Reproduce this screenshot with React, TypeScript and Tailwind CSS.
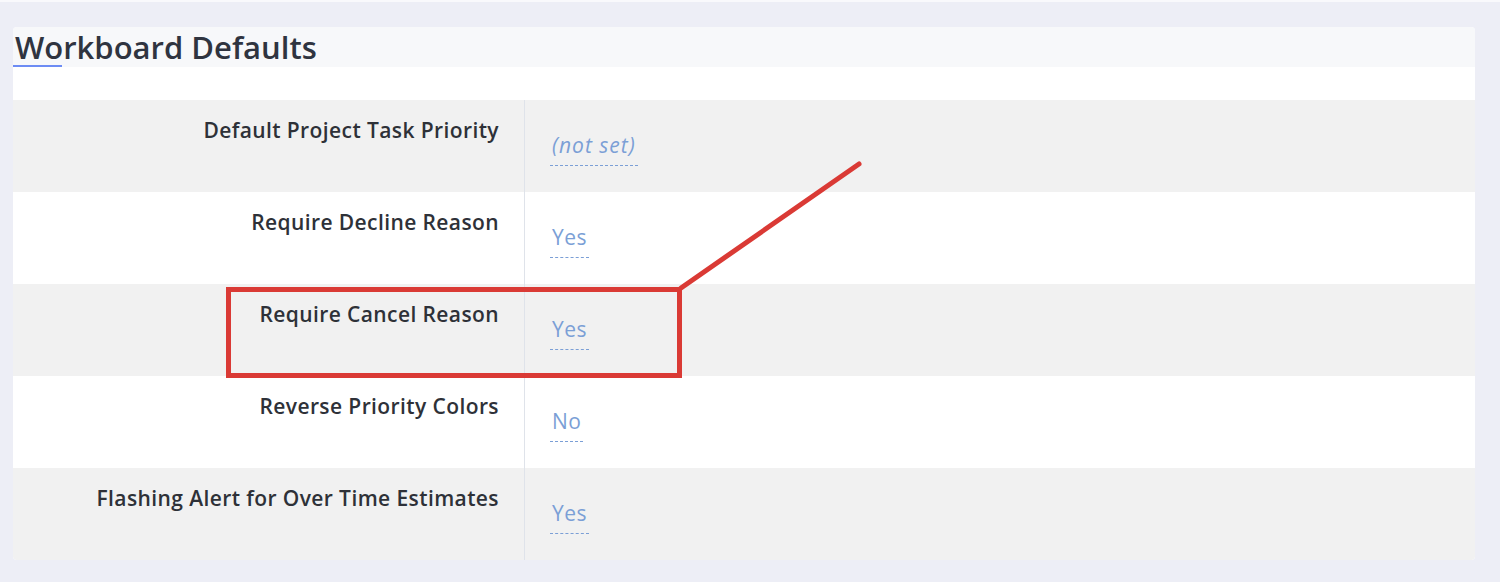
import React from 'react';

type Setting = {
  label: string;
  value: string;
  empty?: boolean;
};

const settings: Setting[] = [
  { label: 'Default Project Task Priority', value: '(not set)', empty: true },
  { label: 'Require Decline Reason', value: 'Yes' },
  { label: 'Require Cancel Reason', value: 'Yes' },
  { label: 'Reverse Priority Colors', value: 'No' },
  { label: 'Flashing Alert for Over Time Estimates', value: 'Yes' },
];

const font = { fontFamily: '"Open Sans", "Noto Sans", sans-serif' };

const App: React.FC = () => {
  return (
    <div className="relative w-[1500px] h-[582px] bg-[#edeef6] overflow-hidden" style={font}>
      <div className="h-[2px] bg-[#f9f9fc]" />
      <div className="ml-[13px] mt-[25px] w-[1462px] bg-white rounded-[4px]">
        {/* Header */}
        <div className="h-[40px] bg-[#f7f8fa] relative rounded-t-[4px]">
          <h2 className="pl-[2px] text-[31px] leading-[40px] font-semibold text-[#2f3440] whitespace-nowrap">
            Workboard Defaults
          </h2>
          <div className="absolute left-0 bottom-0 w-[49px] h-[2px] bg-[#6d8cf4]" />
        </div>
        <div className="h-[33px] bg-white" />

        {/* Settings table */}
        <div className="flex flex-col">
          {settings.map((s, i) => (
            <div
              key={s.label}
              className={`grid grid-cols-[512px_1fr] h-[92px] ${i % 2 === 0 ? 'bg-[#f1f1f1]' : 'bg-white'} ${i === settings.length - 1 ? 'rounded-b-[4px]' : ''}`}
            >
              <div className="pr-[25px] pt-[16px] text-right text-[21px] leading-[28px] tracking-[0.4px] font-semibold text-[#2e3138] border-r border-[#dfe3ea]">
                {s.label}
              </div>
              <div className="pl-[25px] pt-[31px]">
                <span
                  className={`inline-block px-[2px] text-[21px] leading-[28px] text-[#7b9fd6] border-b border-dashed border-[#7b9fd6] pb-[6px] ${s.empty ? 'italic tracking-[1px]' : 'tracking-[0.5px]'}`}
                >
                  {s.value}
                </span>
              </div>
            </div>
          ))}
        </div>
      </div>

      {/* Red annotation */}
      <svg className="absolute left-0 top-0 pointer-events-none" width="1500" height="582">
        <rect x="228.5" y="289.5" width="451" height="86" fill="none" stroke="#da3a35" strokeWidth="5" />
        <line x1="681" y1="288" x2="859" y2="164" stroke="#da3a35" strokeWidth="5" strokeLinecap="round" />
      </svg>
    </div>
  );
};

export default App;
